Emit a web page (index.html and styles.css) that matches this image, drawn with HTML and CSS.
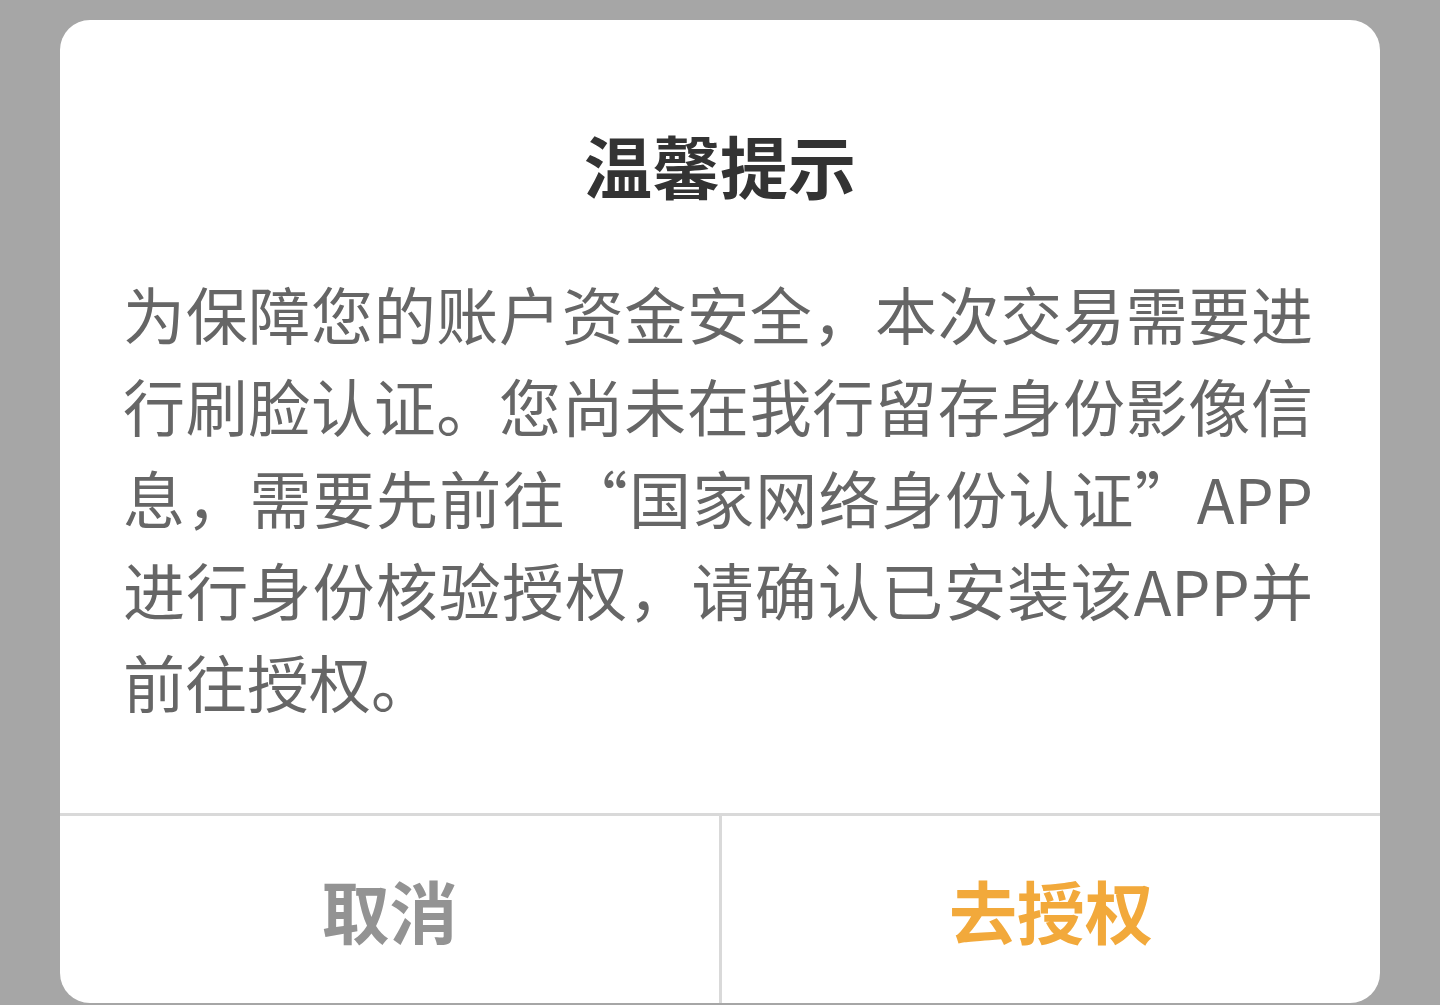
FILE: index.html
```html
<!DOCTYPE html>
<html lang="zh-CN">
<head>
<meta charset="utf-8">
<title>温馨提示</title>
<link rel="stylesheet" href="styles.css">
</head>
<body>
<div class="screen">
  <div class="dialog">
    <h1 class="title">温馨提示</h1>
    <p class="message">为保障您的账户资金安全，本次交易需要进行刷脸认证。您尚未在我行留存身份影像信息，需要先前往“国家网络身份认证”APP进行身份核验授权，请确认已安装该APP并前往授权。</p>
    <div class="actions">
      <div class="btn btn-cancel">取消</div>
      <div class="btn btn-ok">去授权</div>
    </div>
  </div>
</div>
</body>
</html>
```

FILE: styles.css
```css
html, body {
  margin: 0;
  padding: 0;
  height: 100%;
}
body {
  background: #a6a6a6;
  font-family: "Noto Sans CJK SC", "Noto Sans", sans-serif;
  overflow: hidden;
}
.screen {
  height: 1005px;
  padding: 20px 60px 2px 60px;
  box-sizing: border-box;
  display: flex;
}
.dialog {
  flex: 1;
  background: #ffffff;
  border-radius: 30px;
  display: flex;
  flex-direction: column;
  overflow: hidden;
}
.title {
  margin: 0;
  padding-top: 100px;
  font-size: 68px;
  line-height: 90px;
  font-weight: 700;
  color: #333333;
  text-align: center;
}
.message {
  margin: 57px 0 0 0;
  padding: 0 67px 0 63px;
  font-size: 62px;
  line-height: 92px;
  color: #666666;
  text-align: justify;
}
.actions {
  margin-top: auto;
  height: 187px;
  border-top: 3px solid #d9d9d9;
  display: flex;
}
.btn {
  display: flex;
  align-items: center;
  justify-content: center;
  font-size: 68px;
  font-weight: 700;
}
.btn-cancel {
  flex: 0 0 662px;
  box-sizing: border-box;
  color: #939393;
  border-right: 3px solid #d9d9d9;
}
.btn-ok {
  flex: 1;
  color: #f2a93b;
}
```
